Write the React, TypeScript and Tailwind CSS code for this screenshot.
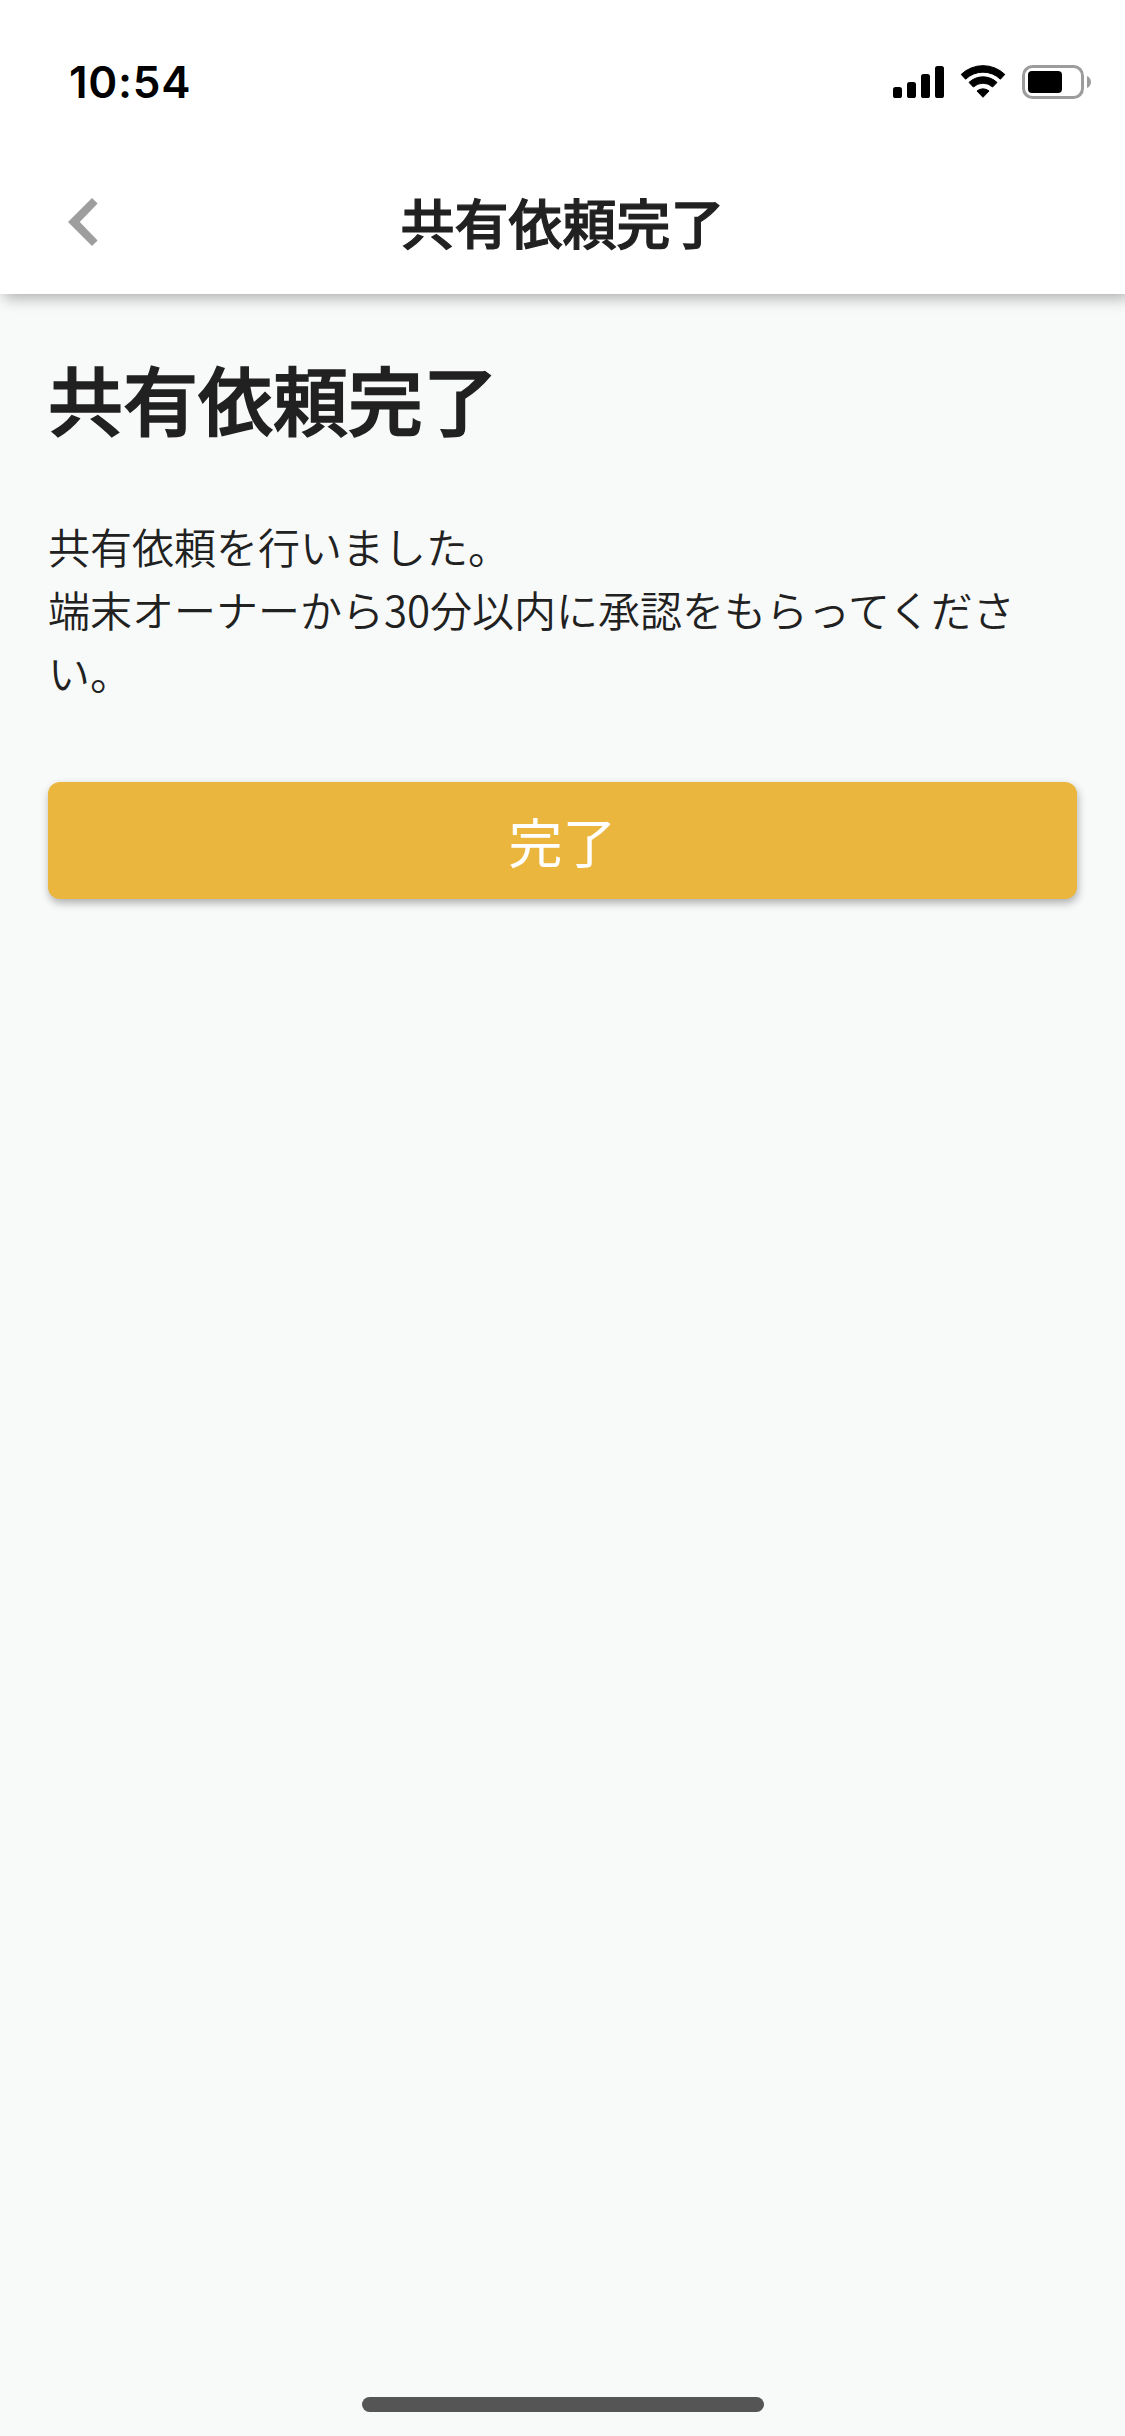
function StatusBar() {
  return (
    <div className="flex h-[150px] items-start justify-between pt-[54px] pl-[69px] pr-[31px]">
      <span className="font-['Inter',sans-serif] text-[44px] leading-[56px] font-semibold tracking-[0.7px] text-black">
        10:54
      </span>
      <svg width="204" height="56" viewBox="888 54 204 56" className="mr-[2px]">
        <rect x="893" y="87" width="9" height="11" rx="2.6" />
        <rect x="907" y="82" width="9" height="16" rx="2.6" />
        <rect x="921" y="74" width="9" height="24" rx="2.6" />
        <rect x="935" y="66" width="9" height="32" rx="2.6" />
        <path d="M961.2 74.4a31.5 31.5 0 0 1 43.6 0l-4.4 4.8a25 25 0 0 0-34.8 0z" stroke="#000" strokeWidth="1" strokeLinejoin="round" />
        <path d="M969 82.4a20.5 20.5 0 0 1 28 0l-4.4 4.6a14 14 0 0 0-19.2 0z" stroke="#000" strokeWidth="1" strokeLinejoin="round" />
        <path d="M977 91a9.5 9.5 0 0 1 12 0l-6 6.3z" stroke="#000" strokeWidth="1" strokeLinejoin="round" />
        <rect x="1023.5" y="66.5" width="59" height="31" rx="9" fill="none" stroke="#9c9c9c" strokeWidth="3" />
        <rect x="1028" y="71" width="34" height="22" rx="4" />
        <path d="M1087 76c5.3 2 5.3 10 0 12z" fill="#9c9c9c" />
      </svg>
    </div>
  );
}

function Header() {
  return (
    <header className="relative h-[294px] bg-white shadow-[4px_4px_14px_rgba(0,0,0,0.31)]">
      <StatusBar />
      <div className="grid h-[144px] grid-cols-[160px_1fr_160px] items-center">
        <button aria-label="戻る" className="pl-[68px]">
          <svg width="30" height="48" viewBox="0 0 30 48">
            <path d="M24 0l5.6 5.6L11.8 24l17.8 18.4L24 48 0 24z" fill="#9e9e9e" />
          </svg>
        </button>
        <div className="text-center text-[54px] leading-[80px] font-medium [-webkit-text-stroke:1.2px_#212121]">
          共有依頼完了
        </div>
      </div>
    </header>
  );
}

export default function App() {
  return (
    <div
      lang="ja"
      className="flex h-[2436px] w-[1125px] flex-col overflow-hidden bg-[#f8faf9] font-['Noto_Sans_CJK_JP',sans-serif] text-[#212121]"
    >
      <Header />
      <main className="flex-1 px-[48px] pt-[48px]">
        <h1 className="text-[75px] leading-[112px] font-medium [-webkit-text-stroke:1.5px_#212121]">
          共有依頼完了
        </h1>
        <p className="mt-[60px] text-[42px] leading-[63px] font-[350]">
          共有依頼を行いました。
          <br />
          端末オーナーから30分以内に承認をもらってください。
        </p>
        <button className="mt-[78.5px] h-[117px] w-full rounded-[12px] bg-[#eab63e] pt-[1px] text-[54px] leading-[80px] text-white shadow-[1px_4px_8px_rgba(0,0,0,0.3)]">
          完了
        </button>
      </main>
      <div className="mb-[24px] h-[15px] w-[402px] self-center rounded-full bg-[#555555]" />
    </div>
  );
}
